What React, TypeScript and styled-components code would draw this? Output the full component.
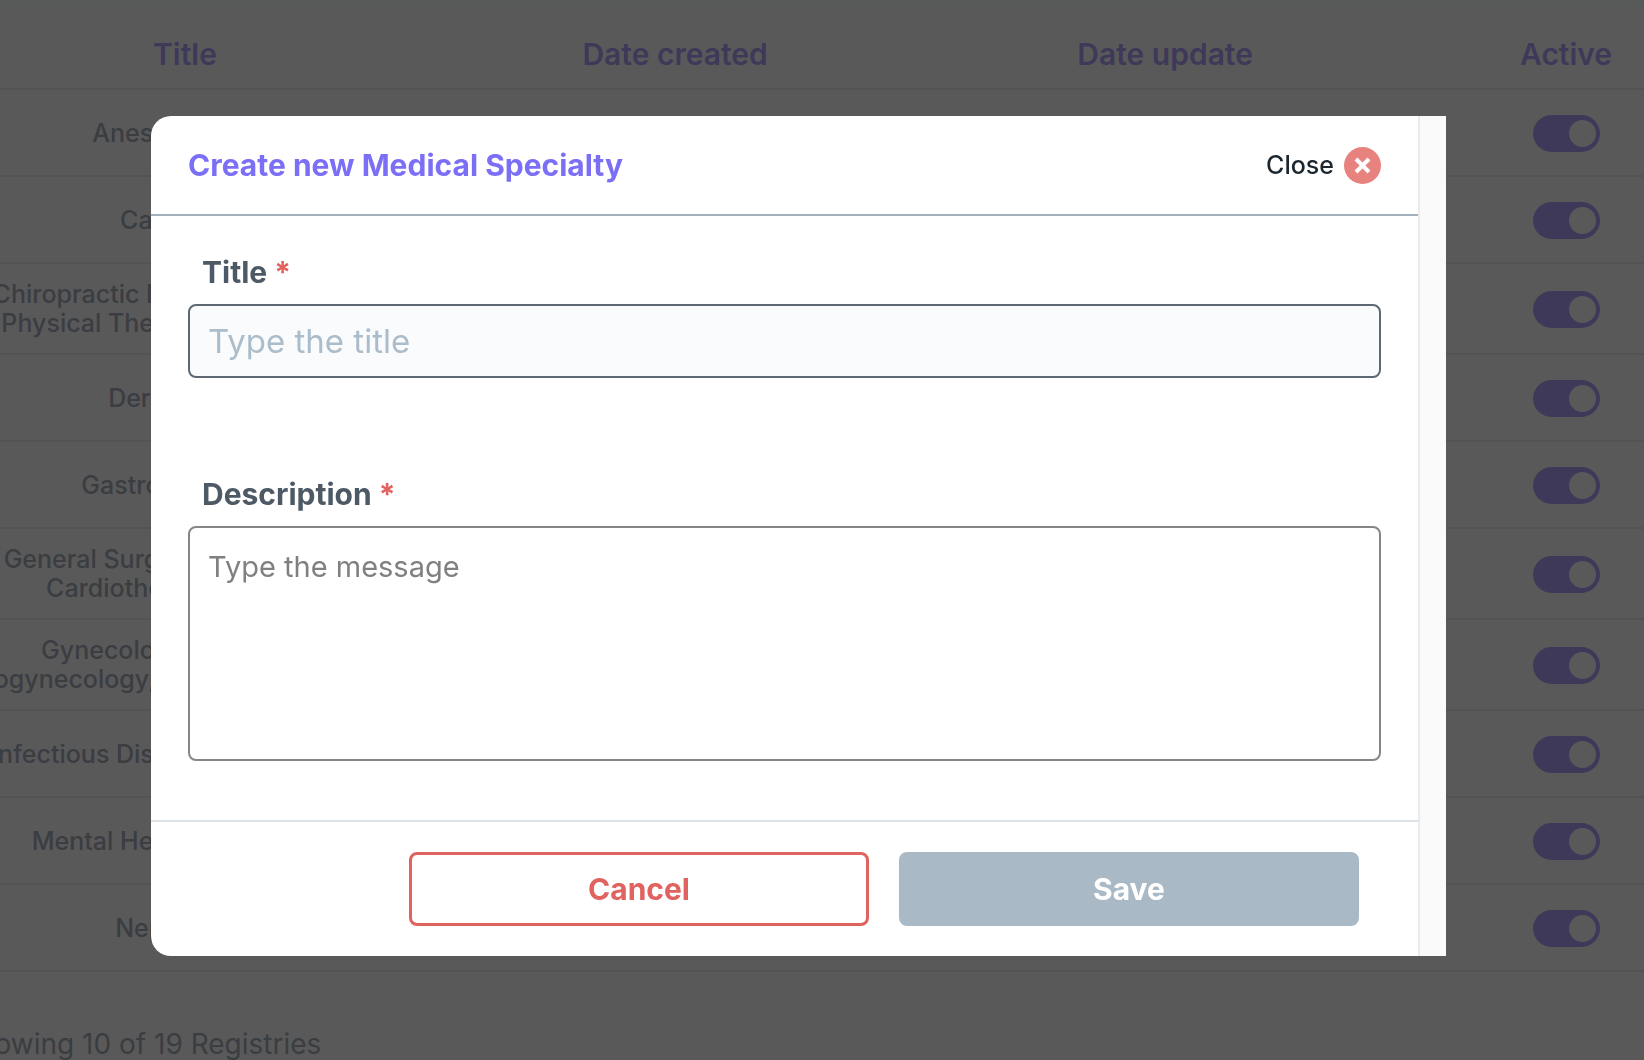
import React from "react";
import styled, { createGlobalStyle } from "styled-components";

const GlobalStyle = createGlobalStyle`
  *, *::before, *::after { box-sizing: border-box; }
  body {
    margin: 0;
    background: #ffffff;
    font-family: Inter, "Liberation Sans", sans-serif;
    color: #4d5a66;
  }
  button, input, textarea { font: inherit; }
`;

const Page = styled.main`
  height: 100vh;
  overflow: hidden;
`;

const Registry = styled.section`
  margin: 0 -78px 0 -60px;
  border-top: 6px solid #f0fffa;
  color: #667287;
`;

const Table = styled.table`
  width: 100%;
  table-layout: fixed;
  border-collapse: separate;
  border-spacing: 0;
`;

const HeadCell = styled.th<{ $share: string }>`
  width: ${(p) => p.$share};
  height: 84px;
  padding: 14px 10px 0;
  border-bottom: 2px solid #dde2e2;
  color: #785aff;
  font-size: 30px;
  font-weight: 600;
  line-height: 36px;
  text-align: center;
`;

const Cell = styled.td`
  height: 87px;
  padding: 16px 10px 15px;
  border-bottom: 2px solid #dde2e2;
  font-size: 25px;
  font-weight: 500;
  line-height: 29px;
  text-align: center;
  white-space: pre-line;
`;

const Toggle = styled.input`
  appearance: none;
  display: flex;
  align-items: center;
  justify-content: flex-end;
  width: 67px;
  height: 37px;
  margin: 0 auto;
  padding: 0 4px;
  border-radius: 19px;
  background: #785aff;

  &::before {
    content: "";
    width: 27px;
    height: 27px;
    border-radius: 50%;
    background: #ffffff;
  }
`;

const Summary = styled.p`
  margin: 0;
  padding: 54px 20px 0;
  font-size: 28px;
  line-height: 36px;
`;

const Overlay = styled.div`
  position: fixed;
  inset: 0;
  padding: 116px 198px 104px 151px;
  background: rgba(48, 48, 48, 0.8);
`;

const Dialog = styled.form`
  display: flex;
  border-radius: 20px 0 0 20px;
  overflow: hidden;
  background: #ffffff;
`;

const DialogContent = styled.div`
  flex: 1;
  min-width: 0;
`;

const ScrollTrack = styled.div`
  width: 28px;
  border-left: 2px solid #ebebeb;
  background: #fafafa;
`;

const DialogHeader = styled.header`
  display: flex;
  align-items: center;
  justify-content: space-between;
  height: 100px;
  padding: 0 37px;
  border-bottom: 2px solid #a3b1bf;
`;

const DialogTitle = styled.h2`
  margin: 0;
  color: #7b6ff6;
  font-size: 30px;
  font-weight: 700;
  line-height: 36px;
`;

const CloseButton = styled.button`
  display: flex;
  align-items: center;
  gap: 10px;
  padding: 0;
  border: 0;
  background: none;
  color: #1b262e;
  font-size: 25px;
  font-weight: 500;
  line-height: 38px;
`;

const DialogBody = styled.div`
  display: flex;
  flex-direction: column;
  gap: 98px;
  padding: 38px 37px 59px;
`;

const Field = styled.div`
  display: flex;
  flex-direction: column;
  gap: 14px;
`;

const Label = styled.label`
  padding-left: 14px;
  font-size: 30px;
  font-weight: 700;
  line-height: 36px;
`;

const Required = styled.span`
  color: #e0635f;
`;

const TextInput = styled.input`
  width: 100%;
  height: 74px;
  padding: 0 18px;
  border: 2px solid #5d6872;
  border-radius: 8px;
  background: #f9fbfd;
  font-size: 33px;
  &::placeholder { color: #abbdca; opacity: 1; }
`;

const TextArea = styled.textarea`
  display: block;
  width: 100%;
  height: 235px;
  padding: 22px 18px;
  border: 2px solid #868686;
  border-radius: 8px;
  background: #ffffff;
  font-size: 29px;
  line-height: 34px;
  resize: none;
  &::placeholder { color: #808080; opacity: 1; }
`;

const DialogFooter = styled.footer`
  display: flex;
  justify-content: flex-end;
  gap: 30px;
  padding: 30px 59px 30px 37px;
  border-top: 2px solid #dbe2e7;
`;

const ActionButton = styled.button<{ $primary?: boolean }>`
  flex: 0 1 460px;
  height: 74px;
  border: 3px solid ${(p) => (p.$primary ? "#aab9c6" : "#e0635f")};
  border-radius: 8px;
  background: ${(p) => (p.$primary ? "#aab9c6" : "#ffffff")};
  color: ${(p) => (p.$primary ? "#ffffff" : "#e0635f")};
  font-size: 30px;
  font-weight: 700;
`;

const CloseIcon = () => (
  <svg width="37" height="37" viewBox="0 0 37 37" aria-hidden="true">
    <circle cx="18.5" cy="18.5" r="18.5" fill="#e8827f" />
    <path d="M12 12l13 13m0-13l-13 13" stroke="#ffffff" strokeWidth="4" />
  </svg>
);

const specialties = [
  "Anesthesiology",
  "Cardiology",
  "Chiropractic Medicine, Wellness\nPhysical Therapy, Rehab Clinic",
  "Dermatology",
  "Gastroenterology",
  "General Surgery, Vascular and\nCardiothoracic Surgery",
  "Gynecology, Obstetrics,\nUrogynecology, Infertility treatments",
  "Infectious Diseases Immunology",
  "Mental Health, Psychiatry",
  "Nephrology",
];

export default function App() {
  return (
    <Page>
      <GlobalStyle />
      <Registry>
        <Table>
          <thead>
            <tr>
              <HeadCell $share="27.5%">Title</HeadCell>
              <HeadCell $share="27.5%">Date created</HeadCell>
              <HeadCell $share="27.5%">Date update</HeadCell>
              <HeadCell $share="17.5%">Active</HeadCell>
            </tr>
          </thead>
          <tbody>
            {specialties.map((name) => (
              <tr key={name}>
                <Cell>{name}</Cell>
                <Cell />
                <Cell />
                <Cell>
                  <Toggle type="checkbox" role="switch" aria-label={`${name} active`} defaultChecked />
                </Cell>
              </tr>
            ))}
          </tbody>
        </Table>
        <Summary>Showing 10 of 19 Registries</Summary>
      </Registry>
      <Overlay>
        <Dialog role="dialog" aria-labelledby="dialog-title">
          <DialogContent>
            <DialogHeader>
              <DialogTitle id="dialog-title">Create new Medical Specialty</DialogTitle>
              <CloseButton type="button">
                Close
                <CloseIcon />
              </CloseButton>
            </DialogHeader>
            <DialogBody>
              <Field>
                <Label htmlFor="title">
                  Title <Required>*</Required>
                </Label>
                <TextInput id="title" type="text" placeholder="Type the title" />
              </Field>
              <Field>
                <Label htmlFor="description">
                  Description <Required>*</Required>
                </Label>
                <TextArea id="description" placeholder="Type the message" />
              </Field>
            </DialogBody>
            <DialogFooter>
              <ActionButton type="button">Cancel</ActionButton>
              <ActionButton type="submit" $primary>Save</ActionButton>
            </DialogFooter>
          </DialogContent>
          <ScrollTrack />
        </Dialog>
      </Overlay>
    </Page>
  );
}
